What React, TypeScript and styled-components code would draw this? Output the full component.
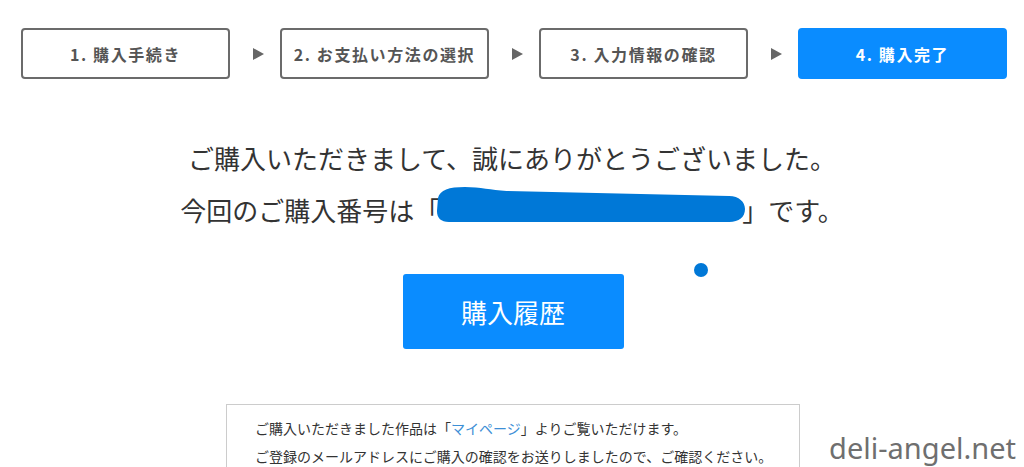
import React from "react";
import styled, { createGlobalStyle } from "styled-components";

const GlobalStyle = createGlobalStyle`
  html, body { margin: 0; padding: 0; background: #fff; }
  body {
    font-family: "Noto Sans CJK JP", "Noto Sans", sans-serif;
    color: #333;
    overflow: hidden;
  }
`;

const Page = styled.div`
  position: relative;
  width: 1024px;
  height: 467px;
  padding-top: 28px;
  box-sizing: border-box;
  overflow: hidden;
`;

const StepsBar = styled.div`
  display: flex;
  align-items: center;
  padding-left: 21px;
`;

const Step = styled.div<{ $active?: boolean }>`
  width: 209px;
  height: 51px;
  box-sizing: border-box;
  display: flex;
  align-items: center;
  justify-content: center;
  border: 2px solid ${(p) => (p.$active ? "#0a8cff" : "#6b6b6b")};
  background: ${(p) => (p.$active ? "#0a8cff" : "#fff")};
  color: ${(p) => (p.$active ? "#fff" : "#555")};
  border-radius: 4px;
  font-size: 16px;
  font-weight: 700;
  letter-spacing: 1.6px;
`;

const ArrowSlot = styled.div`
  width: 50px;
  display: flex;
  justify-content: center;
  padding-left: 6px;
  box-sizing: border-box;
`;

const Triangle = styled.span`
  width: 0;
  height: 0;
  border-left: 11px solid #666;
  border-top: 6px solid transparent;
  border-bottom: 6px solid transparent;
`;

const Message = styled.div`
  margin-top: 53px;
  text-align: center;
  font-size: 26px;
  line-height: 52px;
  color: #333;
`;

const Line = styled.div`
  display: flex;
  justify-content: center;
  align-items: center;
  height: 52px;
`;

const Redaction = styled.svg`
  display: block;
  margin-left: -5px;
  margin-right: -3px;
  margin-bottom: 10px;
`;

const HistoryButton = styled.button`
  display: flex;
  align-items: center;
  justify-content: center;
  width: 221px;
  height: 75px;
  margin: 38px auto 0;
  border: none;
  border-radius: 3px;
  background: #0a8cff;
  color: #fff;
  font-family: "Noto Sans CJK JP", sans-serif;
  font-size: 26px;
  padding: 0;
  position: relative;
  left: 1px;
`;

const Dot = styled.span`
  position: absolute;
  left: 694px;
  top: 263px;
  width: 14px;
  height: 14px;
  border-radius: 50%;
  background: #0078d7;
`;

const InfoBox = styled.div`
  width: 574px;
  box-sizing: border-box;
  margin: 55px auto 0;
  border: 1px solid #ccc;
  padding: 9px 0 12px 28px;
  font-size: 14px;
  line-height: 28px;
  color: #333;
  position: relative;
  left: 1px;
`;

const Link = styled.a`
  color: #3d8fd6;
  text-decoration: none;
`;

const Watermark = styled.div`
  position: absolute;
  right: 8px;
  bottom: 0px;
  font-family: "Noto Sans", sans-serif;
  font-size: 29px;
  color: #6f6f6f;
  line-height: 38px;
`;

const steps = ["1. 購入手続き", "2. お支払い方法の選択", "3. 入力情報の確認", "4. 購入完了"];

export default function App() {
  return (
    <>
      <GlobalStyle />
      <Page>
        <StepsBar>
          {steps.map((s, i) => (
            <React.Fragment key={s}>
              {i > 0 && (
                <ArrowSlot>
                  <Triangle />
                </ArrowSlot>
              )}
              <Step $active={i === steps.length - 1}>{s}</Step>
            </React.Fragment>
          ))}
        </StepsBar>
        <Message>
          <Line>ご購入いただきまして、誠にありがとうございました。</Line>
          <Line>
            <span>今回のご購入番号は「</span>
            <Redaction width="310" height="37" viewBox="0 0 312 37" preserveAspectRatio="none">
              <path
                d="M3,11 C5,3 14,0 30,0 C46,0 56,3 72,4 L296,9 C306,9 312,15 312,22 C312,30 306,35 296,35 L14,35 C6,35 2,31 2,24 Z"
                fill="#0078d7"
              />
            </Redaction>
            <span>」です。</span>
          </Line>
        </Message>
        <HistoryButton>購入履歴</HistoryButton>
        <Dot />
        <InfoBox>
          <div>
            ご購入いただきました作品は「<Link href="#">マイページ</Link>」よりご覧いただけます。
          </div>
          <div>ご登録のメールアドレスにご購入の確認をお送りしましたので、ご確認ください。</div>
        </InfoBox>
        <Watermark>deli-angel.net</Watermark>
      </Page>
    </>
  );
}
